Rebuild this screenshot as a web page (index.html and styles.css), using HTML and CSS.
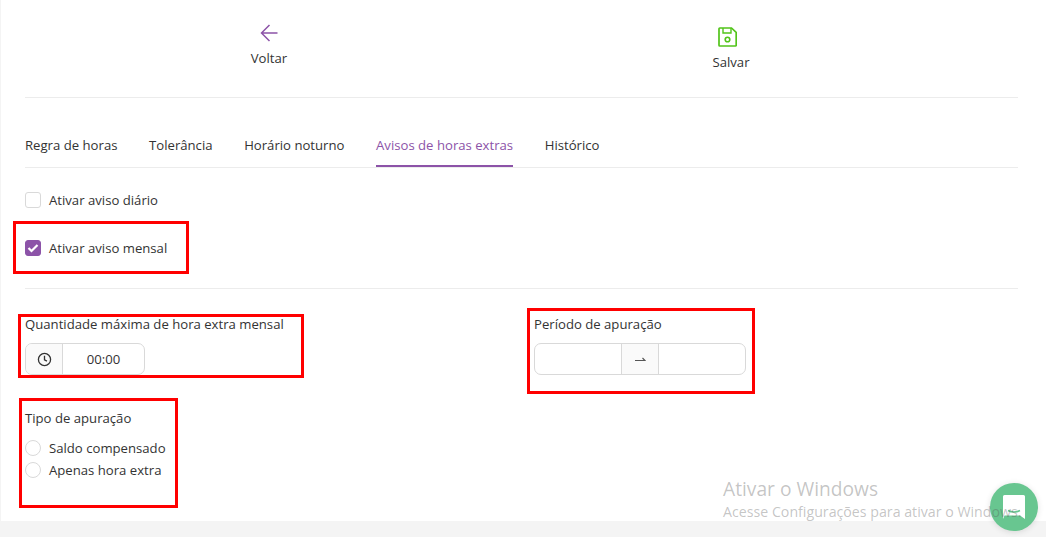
FILE: index.html
```html
<!DOCTYPE html>
<html lang="pt-BR">
<head>
<meta charset="utf-8">
<title>Avisos de horas extras</title>
<link rel="stylesheet" href="styles.css">
</head>
<body>
<main class="page">
  <header class="actions">
    <div class="action action-back">
      <svg class="icon-back" viewBox="0 0 20 20" width="20" height="20" fill="none" stroke="#8c53a8" stroke-width="1.5"><path d="M18.5 10H2.500M10.500 2L2.500 10l8 8"/></svg>
      <span>Voltar</span>
    </div>
    <div class="action action-save">
      <svg class="icon-save" viewBox="0 0 19 20" width="19" height="20" fill="none" stroke="#52c41a" stroke-width="1.700"><path d="M1.800 1h11.700l4.700 4.500v12.700a.8.8 0 0 1-.8.800H1.800a.8.8 0 0 1-.8-.8V1.800a.8.8 0 0 1 .8-.8z"/><path d="M5 1v5h8V1" stroke-width="1.400"/><circle cx="9.500" cy="12.500" r="2.300" stroke-width="1.600"/></svg>
      <span>Salvar</span>
    </div>
  </header>
  <nav class="tabs">
    <span class="tab">Regra de horas</span>
    <span class="tab">Tolerância</span>
    <span class="tab">Horário noturno</span>
    <span class="tab active">Avisos de horas extras</span>
    <span class="tab">Histórico</span>
  </nav>
  <section class="checks">
    <label class="check-row"><span class="check"></span>Ativar aviso diário</label>
    <label class="check-row"><span class="check checked"><svg viewBox="0 0 16 16" width="16" height="16" fill="none" stroke="#fff" stroke-width="2.200"><path d="M3.500 8l3 3 6-6"/></svg></span>Ativar aviso mensal</label>
  </section>
  <section class="fields">
    <div class="field">
      <div class="field-label">Quantidade máxima de hora extra mensal</div>
      <div class="input-group time">
        <span class="addon clock"><svg viewBox="0 0 16 16" width="15" height="15" fill="none" stroke="#333" stroke-width="1.400"><circle cx="8" cy="8" r="6.500"/><path d="M8 4v4.300l2.600 1.500"/></svg></span>
        <span class="value">00:00</span>
      </div>
    </div>
    <div class="field">
      <div class="field-label">Período de apuração</div>
      <div class="input-group range">
        <span class="value"></span>
        <span class="addon arrow"><svg viewBox="0 0 11 6" width="11" height="6" fill="none" stroke="#555" stroke-width="1.200"><path d="M0 4.500h10L7.500 2"/></svg></span>
        <span class="value"></span>
      </div>
    </div>
  </section>
  <section class="radios">
    <div class="field-label">Tipo de apuração</div>
    <label class="radio-row"><span class="radio"></span>Saldo compensado</label>
    <label class="radio-row"><span class="radio"></span>Apenas hora extra</label>
  </section>
</main>

<div class="mark mark-1"></div>
<div class="mark mark-2"></div>
<div class="mark mark-3"></div>
<div class="mark mark-4"></div>

<div class="chat">
  <svg viewBox="0 0 22 24" width="22" height="24"><path fill="#fff" d="M1.500 0h19A1.500 1.500 0 0 1 22 1.500V24l-5-3.500H1.500L0 24V1.500A1.500 1.500 0 0 1 1.500 0z"/><path fill="none" stroke="#68c690" stroke-width="1.500" d="M5 15.500c3.500 2 8 2 12 0"/></svg>
</div>
<div class="watermark">
  <div class="wm-title">Ativar o Windows</div>
  <div class="wm-sub">Acesse Configurações para ativar o Windows.</div>
</div>
</body>
</html>
```
FILE: styles.css
```css
* { box-sizing: border-box; }
html, body { margin: 0; height: 537px; overflow: hidden; }
body {
  background: #f4f4f4;
  font-family: "Open Sans", "Noto Sans", sans-serif;
  font-size: 13.15px;
  line-height: 20px;
  color: #333;
  position: relative;
}
.page {
  height: 521px;
  margin-left: 1px;
  padding: 0 28px 0 24px;
  background: #fff;
}
.actions {
  height: 98px;
  display: grid;
  grid-template-columns: 488px 436px;
  border-bottom: 1px solid #ececec;
}
.action {
  display: flex;
  flex-direction: column;
  align-items: center;
}
.action-back { padding-top: 23px; gap: 5px; }
.action-save { padding-top: 27px; gap: 5px; }
.icon-save { margin-right: 8px; }
.tabs {
  height: 70px;
  padding-top: 37px;
  display: flex;
  gap: 31.6px;
  border-bottom: 1px solid #ececec;
}
.tab { height: 32px; }
.tab.active {
  color: #8c53a8;
  border-bottom: 2px solid #8c53a8;
}
.checks {
  height: 121px;
  padding-top: 24px;
  border-bottom: 1px solid #ececec;
}
.check-row {
  display: flex;
  align-items: center;
  gap: 8px;
  height: 16px;
  margin-bottom: 32px;
}
.check {
  width: 16px;
  height: 16px;
  border: 1px solid #d9d9d9;
  border-radius: 3px;
  background: #fff;
}
.check.checked {
  background: #8c53a8;
  border-color: #8c53a8;
  display: flex;
  align-items: center;
  justify-content: center;
}
.check svg { flex: none; }
.fields {
  display: grid;
  grid-template-columns: 509px 212px;
  padding-top: 25px;
}
.field-label { height: 20px; }
.input-group {
  margin-top: 9px;
  height: 32px;
  display: flex;
  border: 1px solid #d9d9d9;
  border-radius: 7px;
  overflow: hidden;
}
.time { width: 120px; }
.clock {
  width: 37px;
  justify-content: center;
  border-right: 1px solid #d9d9d9;
}
.addon {
  display: flex;
  align-items: center;
  justify-content: center;
  background: #fafafa;
}
.time .value { flex: 1; text-align: center; line-height: 31px; }
.range .value { flex: none; width: 86px; }
.range .value:last-child { flex: 1; }
.arrow {
  width: 38px;
  border-left: 1px solid #d9d9d9;
  border-right: 1px solid #d9d9d9;
}
.radios { padding-top: 33px; }
.radios .field-label { margin-bottom: 9px; }
.radio-row {
  display: flex;
  align-items: center;
  gap: 8px;
  height: 22px;
}
.radio {
  width: 16px;
  height: 16px;
  border: 1px solid #d9d9d9;
  border-radius: 50%;
  background: #fff;
}
.mark {
  position: absolute;
  border: 3px solid #f00;
  pointer-events: none;
}
.mark-1 { left: 13px; top: 221px; width: 176px; height: 53px; }
.mark-2 { left: 18px; top: 314px; width: 286px; height: 64px; }
.mark-3 { left: 527px; top: 308px; width: 228px; height: 86px; }
.mark-4 { left: 19px; top: 398px; width: 159px; height: 110px; }
.watermark {
  position: absolute;
  left: 723px;
  top: 476px;
  color: rgba(90, 90, 90, .36);
  white-space: nowrap;
  pointer-events: none;
}
.wm-title { font-size: 19.2px; line-height: 26px; }
.wm-sub { font-size: 14.2px; line-height: 20px; }
.chat {
  position: absolute;
  left: 990px;
  top: 483px;
  width: 48px;
  height: 48px;
  border-radius: 50%;
  background: #68c690;
  box-shadow: 0 1px 6px rgba(0,0,0,.12);
  display: flex;
  align-items: center;
  justify-content: center;
}
```
